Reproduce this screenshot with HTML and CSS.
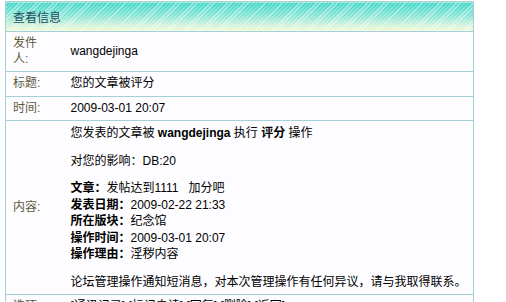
FILE: index.html
```html
<!DOCTYPE html>
<html lang="zh-CN">
<head>
  <meta charset="UTF-8" />
  <title>查看信息</title>
  <link rel="stylesheet" href="styles.css">
</head>
<body>
  <table class="msg">
    <tr>
      <th colspan="2" class="msg-head">查看信息</th>
    </tr>
    <tr>
      <td class="label">发件人:</td>
      <td>wangdejinga</td>
    </tr>
    <tr>
      <td class="label">标题:</td>
      <td>您的文章被评分</td>
    </tr>
    <tr>
      <td class="label">时间:</td>
      <td>2009-03-01 20:07</td>
    </tr>
    <tr>
      <td class="label">内容:</td>
      <td class="body">
        <p>您发表的文章被 <b>wangdejinga</b> 执行 <b>评分</b> 操作</p>
        <p>对您的影响：DB:20</p>
        <p>
          <b>文章：</b>发帖达到1111&nbsp;&nbsp;&nbsp;加分吧<br>
          <b>发表日期：</b>2009-02-22 21:33<br>
          <b>所在版块：</b>纪念馆<br>
          <b>操作时间：</b>2009-03-01 20:07<br>
          <b>操作理由：</b>淫秽内容
        </p>
        <p>论坛管理操作通知短消息，对本次管理操作有任何异议，请与我取得联系。</p>
      </td>
    </tr>
    <tr>
      <td class="label">选项:</td>
      <td>[通讯记录] [标记未读] [回复] [删除] [返回]</td>
    </tr>
  </table>
</body>
</html>
```

FILE: styles.css
```css
* {
  margin: 0;
  padding: 0;
  box-sizing: border-box;
}

body {
  background: #fff;
  font-family: "Liberation Sans", "Noto Sans CJK SC", sans-serif;
  font-size: 12px;
  color: #000;
}

.msg {
  margin: 1px 0 0 5px;
  width: 469px;
  border: 1px solid #a6d0d9;
  border-collapse: collapse;
  background: #fdfcff;
}

.msg-head {
  height: 30px;
  padding: 0 7px;
  text-align: left;
  font-weight: normal;
  color: #1c4f5c;
  border-bottom: 1px solid #a6d0d9;
  background:
    repeating-linear-gradient(135deg, rgba(255, 255, 255, 0.6) 0 1px, transparent 1px 3px),
    linear-gradient(to bottom, #34d5c6 0%, #82e3d4 45%, #d2f2d8 80%, #f4f9d0 100%);
}

.msg td {
  padding: 4px 0 4px 8px;
  line-height: 15.5px;
  border-top: 1px solid #a6d0d9;
  vertical-align: middle;
}

.msg td.label {
  width: 57px;
  padding: 4px 16px 4px 7px;
  color: #5b5a3c;
}

.body {
  line-height: 16.5px !important;
}

.body p + p {
  margin-top: 11px;
}
```
